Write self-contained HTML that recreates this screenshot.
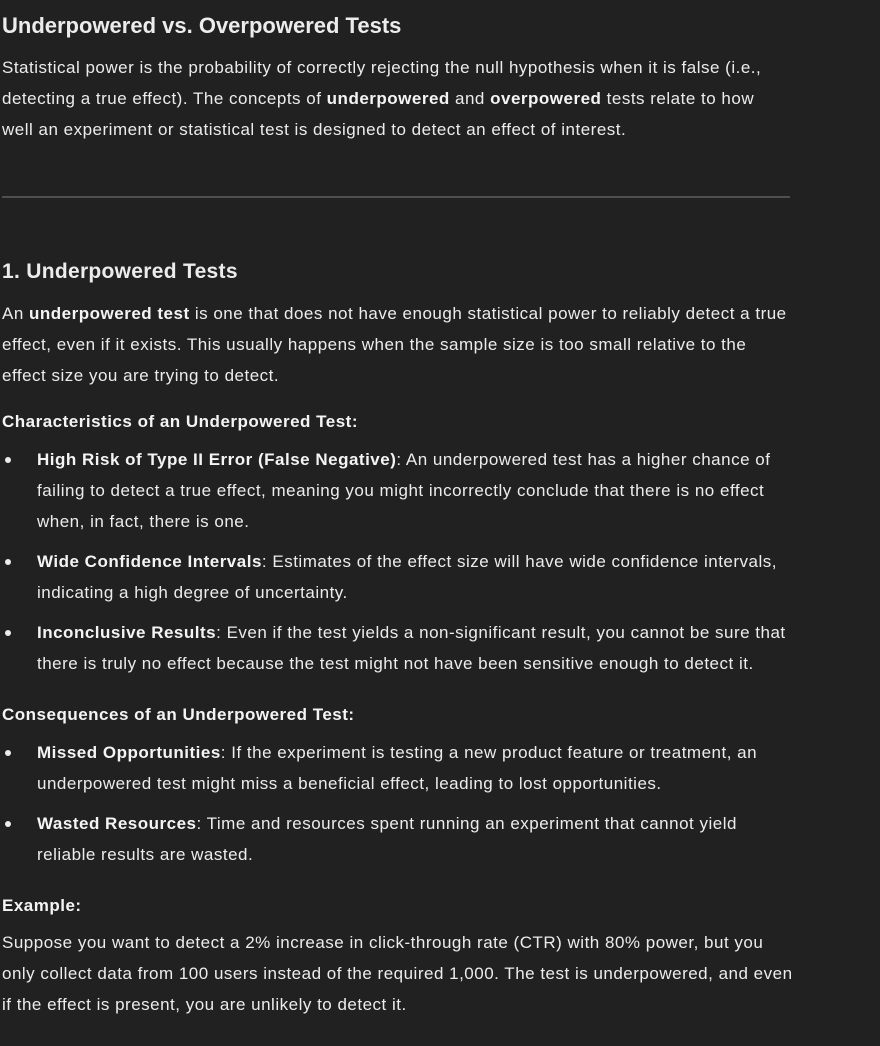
<!DOCTYPE html>
<html><head><meta charset="utf-8"><style>
html,body{margin:0;padding:0;background:#212121;width:880px;height:1046px;overflow:hidden}
body{position:relative;font-family:"Liberation Sans",Arial,sans-serif;color:#ececec;font-size:17px;letter-spacing:0.5px}
.l{position:absolute;left:2px;height:31px;line-height:31px;white-space:nowrap}
.i{left:37px}
b{font-weight:700;color:#f4f4f4}
.d{position:absolute;left:5px;width:6px;height:6px;border-radius:50%;background:#ececec}
.h1{font-size:22px;font-weight:700;letter-spacing:0}
.h2{font-size:21px;font-weight:700;letter-spacing:0.3px}
hr{position:absolute;left:2px;top:196px;width:788px;height:2px;margin:0;border:0;background:#505050}
</style></head><body>
<div class="l h1" style="top:10px">Underpowered vs. Overpowered Tests</div>
<div class="l" style="top:52px">Statistical power is the probability of correctly rejecting the null hypothesis when it is false (i.e.,</div>
<div class="l" style="top:83px">detecting a true effect). The concepts of <b>underpowered</b> and <b>overpowered</b> tests relate to how</div>
<div class="l" style="top:114px">well an experiment or statistical test is designed to detect an effect of interest.</div>
<hr>
<div class="l h2" style="top:256px">1. Underpowered Tests</div>
<div class="l" style="top:298px">An <b>underpowered test</b> is one that does not have enough statistical power to reliably detect a true</div>
<div class="l" style="top:329px">effect, even if it exists. This usually happens when the sample size is too small relative to the</div>
<div class="l" style="top:360px">effect size you are trying to detect.</div>
<div class="l" style="top:406px"><b>Characteristics of an Underpowered Test:</b></div>
<div class="d" style="top:457px"></div>
<div class="l i" style="top:444px"><b>High Risk of Type II Error (False Negative)</b>: An underpowered test has a higher chance of</div>
<div class="l i" style="top:475px">failing to detect a true effect, meaning you might incorrectly conclude that there is no effect</div>
<div class="l i" style="top:506px">when, in fact, there is one.</div>
<div class="d" style="top:559px"></div>
<div class="l i" style="top:546px"><b>Wide Confidence Intervals</b>: Estimates of the effect size will have wide confidence intervals,</div>
<div class="l i" style="top:577px">indicating a high degree of uncertainty.</div>
<div class="d" style="top:630px"></div>
<div class="l i" style="top:617px"><b>Inconclusive Results</b>: Even if the test yields a non-significant result, you cannot be sure that</div>
<div class="l i" style="top:648px">there is truly no effect because the test might not have been sensitive enough to detect it.</div>
<div class="l" style="top:699px"><b>Consequences of an Underpowered Test:</b></div>
<div class="d" style="top:750px"></div>
<div class="l i" style="top:737px"><b>Missed Opportunities</b>: If the experiment is testing a new product feature or treatment, an</div>
<div class="l i" style="top:768px">underpowered test might miss a beneficial effect, leading to lost opportunities.</div>
<div class="d" style="top:821px"></div>
<div class="l i" style="top:808px"><b>Wasted Resources</b>: Time and resources spent running an experiment that cannot yield</div>
<div class="l i" style="top:839px">reliable results are wasted.</div>
<div class="l" style="top:890px"><b>Example:</b></div>
<div class="l" style="top:927px">Suppose you want to detect a 2% increase in click-through rate (CTR) with 80% power, but you</div>
<div class="l" style="top:958px">only collect data from 100 users instead of the required 1,000. The test is underpowered, and even</div>
<div class="l" style="top:989px">if the effect is present, you are unlikely to detect it.</div>
</body></html>
